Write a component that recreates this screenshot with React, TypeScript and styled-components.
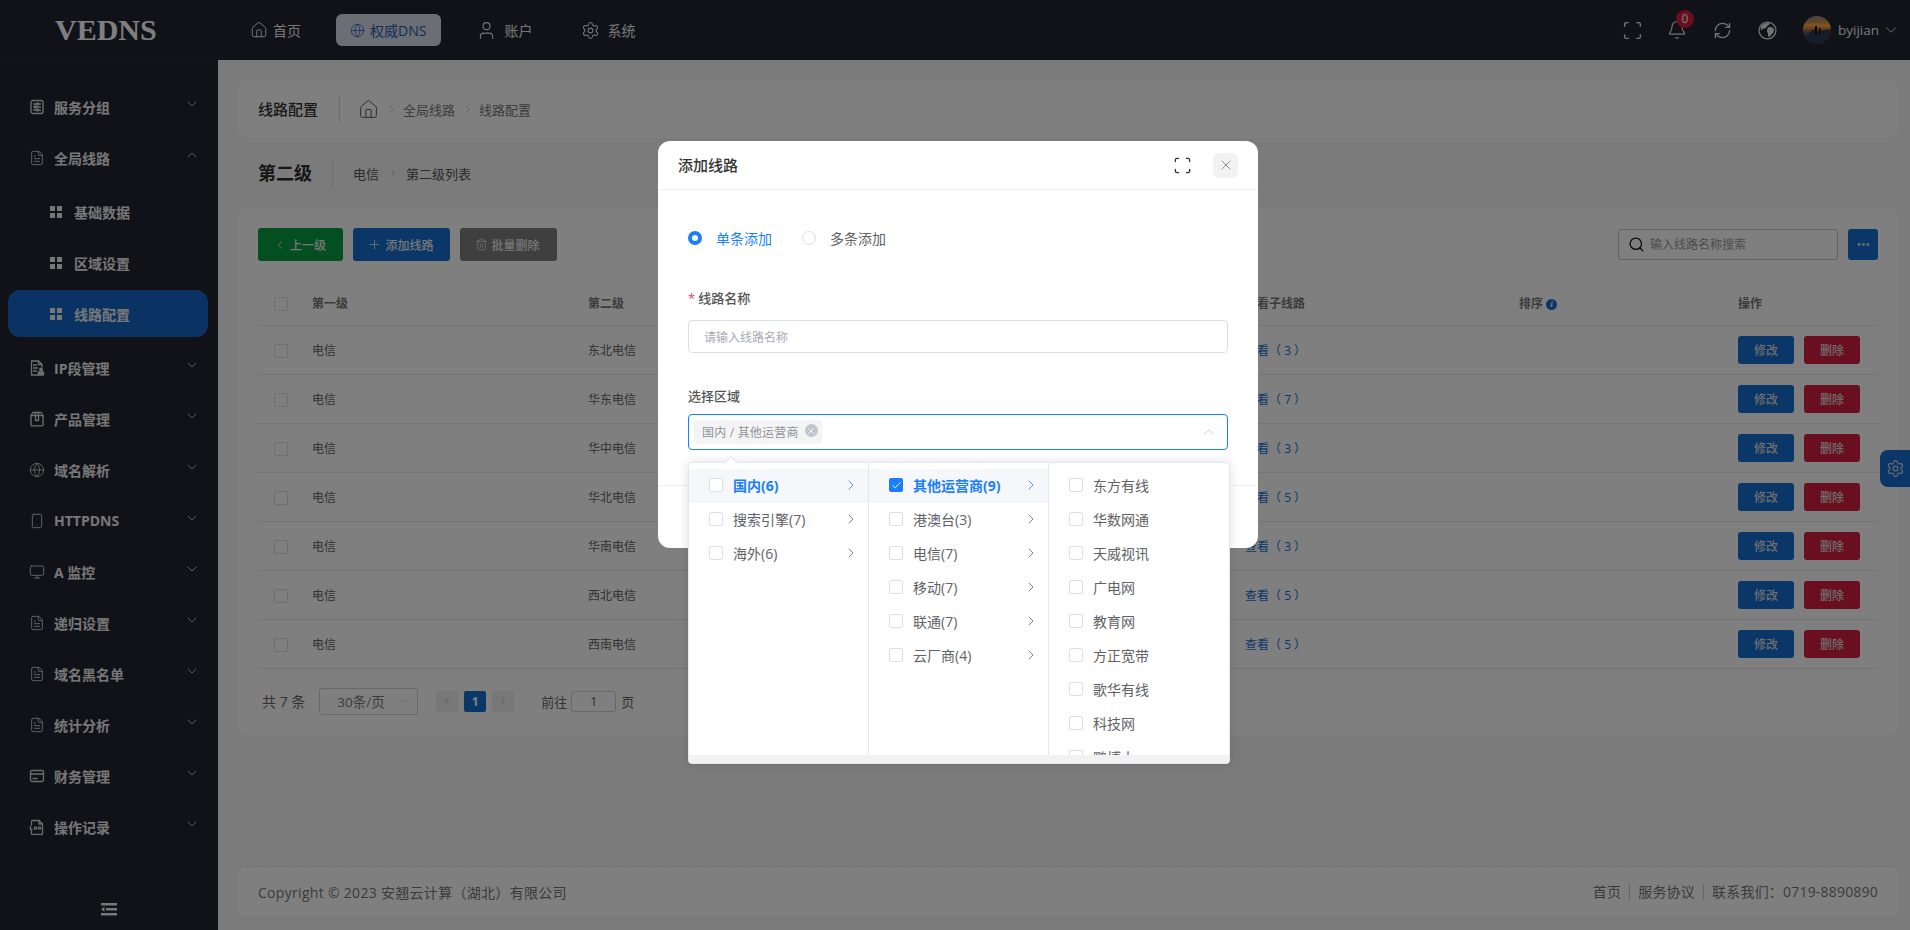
import React from 'react';
import styled, { createGlobalStyle } from 'styled-components';
import {
  Bell,
  Check,
  ChevronDown,
  ChevronLeft,
  ChevronRight,
  ChevronUp,
  Ellipsis,
  FileText,
  Globe,
  Home,
  Monitor,
  Plus,
  RefreshCw,
  Scan,
  Search,
  Settings,
  Smartphone,
  Trash2,
  User,
  X,
} from 'lucide-react';

const FONT = `"Open Sans", "Noto Sans CJK SC", sans-serif`;
const BLUE = '#156fd0';
const RED = '#d51e3e';

const GlobalStyle = createGlobalStyle`
  html, body {
    margin: 0;
    padding: 0;
    height: 100%;
    overflow: hidden;
    font-family: ${FONT};
    background: #f6f6f6;
  }
  * { box-sizing: border-box; }
`;

const Shell = styled.div`
  position: relative;
  width: 1910px;
  height: 930px;
  display: flex;
  flex-direction: column;
  overflow: hidden;
`;

/* top bar */
const TopBar = styled.header`
  height: 60px;
  flex: none;
  background: #20242f;
  display: flex;
  align-items: center;
  color: #eee;
`;

const Logo = styled.div`
  width: 236px;
  padding-left: 55px;
  font-family: "Liberation Serif", serif;
  font-size: 30px;
  font-weight: 700;
  color: #fff;
`;

const Nav = styled.nav`
  display: flex;
  align-items: center;
  gap: 21px;
`;

const NavItem = styled.div<{ $active?: boolean; $spacious?: boolean }>`
  height: 32px;
  display: flex;
  align-items: center;
  gap: ${(p) => (p.$spacious ? '7px' : '5px')};
  padding: 0 ${(p) => (p.$active ? '15px' : '14px')} 0 14px;
  border-radius: 6px;
  font-size: 14px;
  color: ${(p) => (p.$active ? '#2a5aa8' : '#eee')};
  background: ${(p) => (p.$active ? '#d6dcea' : 'transparent')};
`;

const TopTools = styled.div`
  margin-left: auto;
  display: flex;
  align-items: center;
  padding-right: 10px;
`;

const ToolIcon = styled.div`
  position: relative;
  width: 17px;
  height: 17px;
  margin-right: 28px;
  display: flex;
  align-items: center;
  justify-content: center;
  color: #e8e8e8;
  svg { flex: none; }
`;

const Badge = styled.span`
  position: absolute;
  top: -12px;
  left: 7px;
  width: 18px;
  height: 18px;
  border-radius: 50%;
  background: #d01c38;
  color: #fff;
  font-size: 12px;
  line-height: 18px;
  text-align: center;
`;

const Avatar = styled.div`
  width: 28px;
  height: 28px;
  border-radius: 50%;
  overflow: hidden;
  margin: 0 7px 0 -1px;
`;

const UserName = styled.span`
  font-size: 13.500px;
  color: #eee;
  margin-right: 3px;
`;

/* sidebar */
const Body = styled.div`
  flex: 1;
  display: flex;
  min-height: 0;
`;

const Sidebar = styled.aside`
  width: 218px;
  flex: none;
  background: #20242f;
  padding-top: 20px;
  display: flex;
  flex-direction: column;
  border-top: 1px solid #2a2e39;
`;

const MenuRow = styled.div`
  height: 51px;
  display: flex;
  align-items: center;
  padding: 0 18px 0 29px;
  color: #eee;
  font-size: 14px;
  font-weight: 700;
`;

const MenuIcon = styled.span`
  width: 16px;
  height: 16px;
  margin-right: 9px;
  display: flex;
  align-items: center;
  justify-content: center;
  color: #ddd;
`;

const MenuCaret = styled.span`
  margin-left: auto;
  margin-bottom: 5px;
  display: flex;
  color: #ddd;
`;

const SubMenu = styled.div`
  display: flex;
  flex-direction: column;
  gap: 4px;
  margin: 5px 0 5px;
`;

const SubRow = styled.div<{ $active?: boolean }>`
  height: 47px;
  margin: 0 10px 0 8px;
  padding-left: 42px;
  display: flex;
  align-items: center;
  gap: 11px;
  border-radius: 12px;
  font-size: 14px;
  font-weight: 700;
  color: #eee;
  background: ${(p) => (p.$active ? '#1567c9' : 'transparent')};
`;

const CollapseToggle = styled.div`
  margin-top: auto;
  height: 27px;
  display: flex;
  justify-content: center;
  color: #eee;
`;

/* main column */
const Main = styled.main`
  flex: 1;
  min-width: 0;
  padding: 20px 12px 14px 20px;
  display: flex;
  flex-direction: column;
`;

const BreadcrumbCard = styled.div`
  height: 58px;
  flex: none;
  background: #fff;
  border-radius: 8px;
  padding: 0 20px;
  display: flex;
  align-items: center;
`;

const BreadcrumbTitle = styled.div`
  font-size: 15px;
  font-weight: 500;
  color: #333;
  padding-right: 21px;
  margin-right: 18px;
  line-height: 26px;
  border-right: 1px solid #d8d8d8;
`;

const Crumb = styled.span`
  font-size: 13px;
  color: #777;
`;

const CrumbSep = styled.span`
  display: flex;
  margin: 0 4px 0 5px;
  color: #aaa;
`;

const PageHead = styled.div`
  height: 70px;
  flex: none;
  padding-left: 20px;
  display: flex;
  align-items: center;
`;

const PageTitle = styled.h1`
  margin: 0;
  padding-right: 20px;
  margin-right: 20px;
  font-size: 18px;
  font-weight: 700;
  color: #2c2c2c;
  line-height: 30px;
  border-right: 1px solid #dcdcdc;
`;

const PagePath = styled.span`
  font-size: 13px;
  color: #555;
`;

const PathSep = styled.span`
  display: flex;
  margin: 0 7px 0 8px;
  color: #aaa;
`;

const Card = styled.section`
  background: #fff;
  border-radius: 8px;
  padding: 20px;
  flex: none;
`;

const Toolbar = styled.div`
  display: flex;
  align-items: center;
  gap: 10px;
  height: 33px;
  margin-bottom: 20px;
`;

const ToolButton = styled.button<{ $color: string; $width: number }>`
  width: ${(p) => p.$width}px;
  height: 33px;
  border: none;
  border-radius: 3px;
  display: flex;
  align-items: center;
  justify-content: center;
  gap: 3px;
  padding: 0 2px 0 0;
  font-family: ${FONT};
  font-size: 12px;
  font-weight: 500;
  color: #eee;
  background: ${(p) => p.$color};
`;

const SearchBox = styled.label`
  margin-left: auto;
  width: 220px;
  height: 31px;
  border: 1px solid #c4c4c4;
  border-radius: 3px;
  display: flex;
  align-items: center;
  gap: 3px;
  padding-left: 9px;
  color: #111;
`;

const SearchInput = styled.input`
  flex: 1;
  min-width: 0;
  border: none;
  outline: none;
  background: transparent;
  font-family: ${FONT};
  font-size: 12px;
  &::placeholder { color: #999; }
`;

const MoreButton = styled.button`
  width: 30px;
  height: 31px;
  border: none;
  border-radius: 3px;
  background: ${BLUE};
  color: #ddd;
  display: flex;
  align-items: center;
  justify-content: center;
`;

const Table = styled.table`
  width: 1620px;
  table-layout: fixed;
  border-collapse: collapse;
`;

const Th = styled.th<{ $w: number }>`
  width: ${(p) => p.$w}px;
  height: 44px;
  padding: 0;
  text-align: left;
  font-size: 12px;
  font-weight: 700;
  color: #777;
  border-bottom: 1px solid #e8e8e8;
`;

const Td = styled.td`
  height: 49px;
  padding: 0;
  font-size: 12px;
  color: #666;
  border-bottom: 1px solid #e8e8e8;
`;

const Box = styled.span<{ $checked?: boolean; $inset?: number }>`
  width: 14px;
  height: 14px;
  flex: none;
  display: inline-flex;
  align-items: center;
  justify-content: center;
  margin-left: ${(p) => p.$inset || 0}px;
  border: 1px solid ${(p) => (p.$checked ? '#1a7fff' : '#dcdfe6')};
  border-radius: 2px;
  background: ${(p) => (p.$checked ? '#1a7fff' : '#fff')};
  color: #fff;
  vertical-align: middle;
`;

const InfoDot = styled.span`
  display: inline-block;
  width: 11px;
  height: 11px;
  margin-left: 3px;
  border-radius: 50%;
  background: ${BLUE};
  color: #fff;
  font-family: "Liberation Serif", serif;
  font-size: 9px;
  font-style: italic;
  font-weight: 700;
  line-height: 11px;
  text-align: center;
  vertical-align: 1px;
`;

const ViewLink = styled.a`
  color: ${BLUE};
`;

const RowActions = styled.div`
  display: flex;
  gap: 10px;
`;

const RowButton = styled.button<{ $danger?: boolean }>`
  width: 56px;
  height: 28px;
  border: none;
  border-radius: 3px;
  font-family: ${FONT};
  font-size: 12px;
  font-weight: 500;
  color: #ddd;
  background: ${(p) => (p.$danger ? RED : BLUE)};
`;

const Pager = styled.div`
  margin-top: 19px;
  height: 27px;
  display: flex;
  align-items: center;
  padding-left: 4px;
  font-size: 14px;
  color: #666;
`;

const PageSize = styled.div`
  width: 99px;
  height: 27px;
  margin: 0 18px 0 14px;
  padding: 0 8px 0 17px;
  display: flex;
  align-items: center;
  justify-content: space-between;
  border: 1px solid #d0d0d0;
  border-radius: 3px;
  font-size: 13.500px;
  color: #777;
`;

const PageButton = styled.span<{ $active?: boolean }>`
  width: 22px;
  height: 21px;
  margin-right: 6px;
  border-radius: 2px;
  display: flex;
  align-items: center;
  justify-content: center;
  font-size: 12px;
  font-weight: 700;
  color: ${(p) => (p.$active ? '#fff' : '#bbb')};
  background: ${(p) => (p.$active ? BLUE : '#f0f0f0')};
`;

const JumpInput = styled.span`
  width: 45px;
  height: 21px;
  margin: 0 5px 0 4px;
  border: 1px solid #d0d0d0;
  border-radius: 3px;
  display: flex;
  align-items: center;
  justify-content: center;
  font-size: 13px;
`;

const JumpLabel = styled.span`
  margin-left: 21px;
  font-size: 13px;
`;

const JumpUnit = styled.span`
  font-size: 13px;
`;

const Footer = styled.footer`
  margin-top: auto;
  height: 50px;
  flex: none;
  padding: 0 20px;
  display: flex;
  align-items: center;
  justify-content: space-between;
  background: #fff;
  border-top: 1px dashed #ddd;
  border-radius: 8px;
  font-size: 14px;
  color: #777;
`;

const Copyright = styled.span`
  letter-spacing: 0.300px;
`;

const FooterLinks = styled.div`
  display: flex;
  align-items: center;
  letter-spacing: 0.200px;
`;

const FooterLink = styled.span<{ $first?: boolean }>`
  padding-left: ${(p) => (p.$first ? 0 : 8)}px;
  margin-left: ${(p) => (p.$first ? 0 : 8)}px;
  border-left: ${(p) => (p.$first ? 'none' : '1px solid #ccc')};
  line-height: 16px;
`;

const GearTab = styled.div`
  position: absolute;
  right: 0;
  top: 450px;
  width: 30px;
  height: 37px;
  border-radius: 8px 0 0 8px;
  background: ${BLUE};
  color: #ddd;
  display: flex;
  align-items: center;
  justify-content: center;
`;

/* dialog */
const Scrim = styled.div`
  position: absolute;
  inset: 0;
  background: rgba(0, 0, 0, 0.5);
  display: flex;
  justify-content: center;
  align-items: flex-start;
  padding: 141px 0 0 6px;
`;

const Dialog = styled.div`
  width: 600px;
  height: 407px;
  background: #fff;
  border-radius: 12px;
  display: flex;
  flex-direction: column;
`;

const DialogHead = styled.div`
  height: 49px;
  flex: none;
  padding: 0 20px;
  display: flex;
  align-items: center;
  border-bottom: 1px solid #f0f0f0;
`;

const DialogTitle = styled.div`
  font-size: 15px;
  font-weight: 500;
  color: #333;
  margin-bottom: 1px;
`;

const DialogExpand = styled.span`
  margin-left: auto;
  margin-right: 21px;
  display: flex;
  color: #333;
`;

const DialogClose = styled.span`
  width: 25px;
  height: 25px;
  border-radius: 6px;
  background: #f2f2f2;
  display: flex;
  align-items: center;
  justify-content: center;
  color: #777;
`;

const DialogBody = styled.div`
  flex: 1;
  padding: 38px 30px 0;
`;

const DialogFoot = styled.div`
  height: 63px;
  flex: none;
  border-top: 1px solid #f0f0f0;
`;

const RadioRow = styled.div`
  height: 20px;
  display: flex;
  align-items: center;
  margin-bottom: 40px;
`;

const RadioDot = styled.span<{ $on?: boolean }>`
  width: 14px;
  height: 14px;
  border-radius: 50%;
  flex: none;
  margin-right: 14px;
  background: #fff;
  border: ${(p) => (p.$on ? '4.5px solid #1a7fff' : '1px solid #dcdfe6')};
`;

const RadioText = styled.span<{ $on?: boolean }>`
  font-size: 14px;
  color: ${(p) => (p.$on ? '#1a7fff' : '#606266')};
  margin-right: ${(p) => (p.$on ? '30px' : 0)};
`;

const FieldLabel = styled.div`
  height: 20px;
  line-height: 20px;
  font-size: 13px;
  font-weight: 500;
  color: #555;
`;

const Star = styled.span`
  color: #f5364f;
  margin-right: 3px;
`;

const TextField = styled.div`
  height: 33px;
  margin: 12px 0 33px;
  padding-left: 15px;
  display: flex;
  align-items: center;
  border: 1px solid #dcdfe6;
  border-radius: 4px;
  font-size: 12px;
  color: #a8abb2;
`;

const SelectField = styled.div`
  position: relative;
  height: 36px;
  margin-top: 8px;
  padding: 0 9px 0 5px;
  display: flex;
  align-items: center;
  justify-content: space-between;
  border: 1px solid #1a7fff;
  border-radius: 4px;
  color: #c0c4cc;
`;

const Tag = styled.span`
  height: 24px;
  padding: 0 4px 0 8px;
  display: flex;
  align-items: center;
  gap: 6px;
  border-radius: 4px;
  background: #f4f4f5;
  font-size: 12px;
  letter-spacing: 0.200px;
  color: #909399;
`;

const TagClose = styled.span`
  width: 13px;
  height: 13px;
  margin-bottom: 3px;
  border-radius: 50%;
  background: #c0c4cc;
  color: #fff;
  display: flex;
  align-items: center;
  justify-content: center;
`;

/* cascader popup */
const Popup = styled.div`
  position: absolute;
  top: 47px;
  left: -1px;
  width: 542px;
  height: 302px;
  background: #fff;
  border: 1px solid #e4e7ed;
  border-radius: 4px;
  box-shadow: 0 0 12px rgba(0, 0, 0, 0.12);
  display: flex;
  flex-direction: column;
  overflow: visible;
`;

const PopupArrow = styled.span`
  position: absolute;
  top: -5px;
  left: 37px;
  width: 10px;
  height: 10px;
  background: #fff;
  border-left: 1px solid #e4e7ed;
  border-top: 1px solid #e4e7ed;
  transform: rotate(45deg);
`;

const Columns = styled.div`
  flex: 1;
  min-height: 0;
  display: grid;
  grid-template-columns: 180px 180px 1fr;
`;

const Column = styled.div`
  overflow: hidden;
  padding-top: 6px;
  border-right: 1px solid #e4e7ed;
  &:last-child { border-right: none; }
`;

const Option = styled.div<{ $active?: boolean }>`
  height: 34px;
  padding: 0 9px 2px 20px;
  display: flex;
  align-items: center;
  gap: 10px;
  font-size: 14px;
  font-weight: ${(p) => (p.$active ? 700 : 400)};
  color: ${(p) => (p.$active ? '#1a7fff' : '#606266')};
  background: ${(p) => (p.$active ? '#f5f7fa' : 'transparent')};
`;

const OptionArrow = styled.span<{ $active?: boolean }>`
  margin-left: auto;
  display: flex;
  color: ${(p) => (p.$active ? '#1a7fff' : '#606266')};
`;

const ScrollTrack = styled.div`
  height: 8px;
  flex: none;
  background: #f2f2f2;
`;

/* hand drawn icons */
const Stroke = styled.svg`
  fill: none;
  stroke: currentColor;
  stroke-width: 1.3;
  stroke-linecap: round;
  stroke-linejoin: round;
`;

const GroupIcon = () => (
  <Stroke width="16" height="16" viewBox="0 0 16 16">
    <rect x="2" y="1.500" width="12" height="13" rx="2" />
    <path d="M4.500 5h3M9.500 5h2M4.500 8h1M8 8h3.500M4.500 11h3M9.500 11h2" />
    <circle cx="8.500" cy="5" r="1" />
    <circle cx="6.500" cy="8" r="1" />
    <circle cx="8.500" cy="11" r="1" />
  </Stroke>
);

const IpIcon = () => (
  <Stroke width="16" height="16" viewBox="0 0 16 16">
    <path d="M9.500 15H2.500V1h7l3.500 3.500V7" />
    <path d="M9.500 1v3.500H13M4.500 5h3M4.500 8h4M4.500 11h3" />
    <circle cx="12" cy="9.500" r="1.300" fill="currentColor" />
    <rect x="9.500" y="12" width="5" height="3" fill="currentColor" />
  </Stroke>
);

const BoxIcon = () => (
  <Stroke width="16" height="16" viewBox="0 0 16 16">
    <path d="M4 1.500h8l2 3V14a.8.800 0 0 1-.8.800H2.800A.8.800 0 0 1 2 14V4.500z" />
    <path d="M2 4.500h12M6.500 1.500v8h3v-8" />
  </Stroke>
);

const WalletIcon = () => (
  <Stroke width="16" height="16" viewBox="0 0 16 16">
    <rect x="1.500" y="2.500" width="13" height="11" rx="1.500" />
    <path d="M1.500 6h13M4 10.500h4" />
  </Stroke>
);

const LogIcon = () => (
  <Stroke width="16" height="16" viewBox="0 0 16 16">
    <path d="M2.500 6V2.500a1 1 0 0 1 1-1H10l3.500 3.500v9.500a1 1 0 0 1-1 1h-9a1 1 0 0 1-1-1V12" />
    <path d="M10 1.500V5h3.500M1.500 7.500v3h1.500" />
    <circle cx="6.500" cy="9" r="1.200" />
    <circle cx="10.500" cy="9" r="1.200" />
  </Stroke>
);

const GridIcon = () => (
  <svg width="13" height="12" viewBox="0 0 13 12" fill="currentColor">
    <rect x="0" y="0" width="5" height="5" />
    <rect x="7" y="0" width="5" height="5" />
    <rect x="0" y="7" width="5" height="5" />
    <rect x="7" y="7" width="5" height="5" />
  </svg>
);

const OutdentIcon = () => (
  <svg width="16" height="13" viewBox="0 0 16 13" fill="currentColor">
    <rect x="0" y="0" width="16" height="2.500" />
    <rect x="5" y="5" width="11" height="2.500" />
    <rect x="0" y="10" width="16" height="2.500" />
    <path d="M0 6.200 3.500 3.800v5z" />
  </svg>
);

const EarthIcon = () => (
  <svg width="19" height="19" viewBox="0 0 18 18">
    <circle cx="9" cy="9" r="8" fill="none" stroke="currentColor" strokeWidth="1.200" />
    <path
      fill="currentColor"
      d="M5 3c2-1 4-1.500 6-1 .5 1-1 2-2 2.500S8 7 6 7 3.500 8 3 9C2 7 3 4 5 3zM10 6c2-1 4 0 5 1.500.5 2-.5 4-2 5-1 1-2 3-3 2.500s0-3-1-4-.5-4 1-5z"
    />
  </svg>
);

const AvatarPhoto = () => (
  <svg width="28" height="28" viewBox="0 0 28 28">
    <defs>
      <linearGradient id="sky" x1="0" y1="0" x2="0" y2="1">
        <stop offset="0" stopColor="#8a8a88" />
        <stop offset="0.2" stopColor="#c08a50" />
        <stop offset="0.34" stopColor="#ffb040" />
        <stop offset="0.45" stopColor="#d87a30" />
        <stop offset="0.6" stopColor="#50586a" />
        <stop offset="1" stopColor="#1c2a44" />
      </linearGradient>
    </defs>
    <rect width="28" height="28" fill="url(#sky)" />
    <path d="M0 22 L11 13 L14 15 L28 13 V28 H0z" fill="#2c3a54" />
    <path d="M12 10h2v9h-2zM16 12h1.500v7H16z" fill="#10131c" />
  </svg>
);

const GROUPS_BELOW = [
  { icon: <IpIcon />, label: 'IP段管理' },
  { icon: <BoxIcon />, label: '产品管理' },
  { icon: <Globe size={16} strokeWidth={1.2} />, label: '域名解析' },
  { icon: <Smartphone size={16} strokeWidth={1.3} />, label: 'HTTPDNS' },
  { icon: <Monitor size={16} strokeWidth={1.3} />, label: 'A 监控' },
  { icon: <FileText size={16} strokeWidth={1.3} />, label: '递归设置' },
  { icon: <FileText size={16} strokeWidth={1.3} />, label: '域名黑名单' },
  { icon: <FileText size={16} strokeWidth={1.3} />, label: '统计分析' },
  { icon: <WalletIcon />, label: '财务管理' },
  { icon: <LogIcon />, label: '操作记录' },
];

const ROWS = [
  { name: '东北电信', count: 3 },
  { name: '华东电信', count: 7 },
  { name: '华中电信', count: 3 },
  { name: '华北电信', count: 5 },
  { name: '华南电信', count: 3 },
  { name: '西北电信', count: 5 },
  { name: '西南电信', count: 5 },
];

const COL_ONE = ['国内(6)', '搜索引擎(7)', '海外(6)'];
const COL_TWO = ['其他运营商(9)', '港澳台(3)', '电信(7)', '移动(7)', '联通(7)', '云厂商(4)'];
const COL_THREE = ['东方有线', '华数网通', '天威视讯', '广电网', '教育网', '方正宽带', '歌华有线', '科技网', '鹏博士'];

const MenuGroup = ({ icon, label, open }: { icon: React.ReactNode; label: string; open?: boolean }) => (
  <MenuRow>
    <MenuIcon>{icon}</MenuIcon>
    {label}
    <MenuCaret>{open ? <ChevronUp size={16} strokeWidth={1.2} /> : <ChevronDown size={16} strokeWidth={1.2} />}</MenuCaret>
  </MenuRow>
);

const App = () => (
  <Shell>
    <GlobalStyle />
    <TopBar>
      <Logo>VEDNS</Logo>
      <Nav>
        <NavItem>
          <Home size={18} strokeWidth={1.3} />
          首页
        </NavItem>
        <NavItem $active>
          <Globe size={15} strokeWidth={1.2} />
          权威DNS
        </NavItem>
        <NavItem $spacious>
          <User size={21} strokeWidth={1.2} />
          账户
        </NavItem>
        <NavItem $spacious>
          <Settings size={19} strokeWidth={1.3} />
          系统
        </NavItem>
      </Nav>
      <TopTools>
        <ToolIcon>
          <Scan size={21} strokeWidth={1.7} />
        </ToolIcon>
        <ToolIcon>
          <Bell size={20} strokeWidth={1.4} />
          <Badge>0</Badge>
        </ToolIcon>
        <ToolIcon>
          <RefreshCw size={19} strokeWidth={1.6} />
        </ToolIcon>
        <ToolIcon>
          <EarthIcon />
        </ToolIcon>
        <Avatar>
          <AvatarPhoto />
        </Avatar>
        <UserName>byijian</UserName>
        <ChevronDown size={18} strokeWidth={1.2} />
      </TopTools>
    </TopBar>

    <Body>
      <Sidebar>
        <MenuGroup icon={<GroupIcon />} label="服务分组" />
        <MenuGroup icon={<FileText size={16} strokeWidth={1.3} />} label="全局线路" open />
        <SubMenu>
          <SubRow>
            <GridIcon />
            基础数据
          </SubRow>
          <SubRow>
            <GridIcon />
            区域设置
          </SubRow>
          <SubRow $active>
            <GridIcon />
            线路配置
          </SubRow>
        </SubMenu>
        {GROUPS_BELOW.map((g) => (
          <MenuGroup key={g.label} icon={g.icon} label={g.label} />
        ))}
        <CollapseToggle>
          <OutdentIcon />
        </CollapseToggle>
      </Sidebar>

      <Main>
        <BreadcrumbCard>
          <BreadcrumbTitle>线路配置</BreadcrumbTitle>
          <Home size={21} strokeWidth={1.1} color="#555" />
          <CrumbSep>
            <ChevronRight size={15} strokeWidth={1} />
          </CrumbSep>
          <Crumb>全局线路</Crumb>
          <CrumbSep>
            <ChevronRight size={15} strokeWidth={1} />
          </CrumbSep>
          <Crumb>线路配置</Crumb>
        </BreadcrumbCard>

        <PageHead>
          <PageTitle>第二级</PageTitle>
          <PagePath>电信</PagePath>
          <PathSep>
            <ChevronRight size={12} strokeWidth={1.5} />
          </PathSep>
          <PagePath>第二级列表</PagePath>
        </PageHead>

        <Card>
          <Toolbar>
            <ToolButton $color="#099f45" $width={85}>
              <ChevronLeft size={14} strokeWidth={1.3} />
              上一级
            </ToolButton>
            <ToolButton $color={BLUE} $width={97}>
              <Plus size={15} strokeWidth={1.3} />
              添加线路
            </ToolButton>
            <ToolButton $color="#7e7e7e" $width={97}>
              <Trash2 size={13} strokeWidth={1.3} />
              批量删除
            </ToolButton>
            <SearchBox>
              <Search size={17} strokeWidth={1.8} />
              <SearchInput placeholder="输入线路名称搜索" />
            </SearchBox>
            <MoreButton>
              <Ellipsis size={15} strokeWidth={2.6} />
            </MoreButton>
          </Toolbar>

          <Table>
            <thead>
              <tr>
                <Th $w={54}>
                  <Box $inset={16} />
                </Th>
                <Th $w={276}>第一级</Th>
                <Th $w={657}>第二级</Th>
                <Th $w={274}>查看子线路</Th>
                <Th $w={219}>
                  排序
                  <InfoDot>i</InfoDot>
                </Th>
                <Th $w={140}>操作</Th>
              </tr>
            </thead>
            <tbody>
              {ROWS.map((row) => (
                <tr key={row.name}>
                  <Td>
                    <Box $inset={16} />
                  </Td>
                  <Td>电信</Td>
                  <Td>{row.name}</Td>
                  <Td>
                    <ViewLink>查看（ {row.count} ）</ViewLink>
                  </Td>
                  <Td />
                  <Td>
                    <RowActions>
                      <RowButton>修改</RowButton>
                      <RowButton $danger>删除</RowButton>
                    </RowActions>
                  </Td>
                </tr>
              ))}
            </tbody>
          </Table>

          <Pager>
            共 7 条
            <PageSize>
              30条/页
              <ChevronDown size={12} strokeWidth={1.3} color="#bbb" />
            </PageSize>
            <PageButton>
              <ChevronLeft size={12} strokeWidth={2} />
            </PageButton>
            <PageButton $active>1</PageButton>
            <PageButton>
              <ChevronRight size={12} strokeWidth={2} />
            </PageButton>
            <JumpLabel>前往</JumpLabel>
            <JumpInput>1</JumpInput>
            <JumpUnit>页</JumpUnit>
          </Pager>
        </Card>

        <Footer>
          <Copyright>Copyright © 2023 安翘云计算（湖北）有限公司</Copyright>
          <FooterLinks>
            <FooterLink $first>首页</FooterLink>
            <FooterLink>服务协议</FooterLink>
            <FooterLink>联系我们：0719-8890890</FooterLink>
          </FooterLinks>
        </Footer>
      </Main>
    </Body>

    <GearTab>
      <Settings size={19} strokeWidth={1.4} />
    </GearTab>

    <Scrim>
      <Dialog>
        <DialogHead>
          <DialogTitle>添加线路</DialogTitle>
          <DialogExpand>
            <Scan size={19} strokeWidth={1.7} />
          </DialogExpand>
          <DialogClose>
            <X size={16} strokeWidth={1.2} />
          </DialogClose>
        </DialogHead>
        <DialogBody>
          <RadioRow>
            <RadioDot $on />
            <RadioText $on>单条添加</RadioText>
            <RadioDot />
            <RadioText>多条添加</RadioText>
          </RadioRow>
          <FieldLabel>
            <Star>*</Star>
            线路名称
          </FieldLabel>
          <TextField>请输入线路名称</TextField>
          <FieldLabel>选择区域</FieldLabel>
          <SelectField>
            <Tag>
              国内 / 其他运营商
              <TagClose>
                <X size={10} strokeWidth={2} />
              </TagClose>
            </Tag>
            <ChevronUp size={18} strokeWidth={1.1} />
            <Popup>
              <PopupArrow />
              <Columns>
                <Column>
                  {COL_ONE.map((label, i) => (
                    <Option key={label} $active={i === 0}>
                      <Box />
                      {label}
                      <OptionArrow $active={i === 0}>
                        <ChevronRight size={16} strokeWidth={1.2} />
                      </OptionArrow>
                    </Option>
                  ))}
                </Column>
                <Column>
                  {COL_TWO.map((label, i) => (
                    <Option key={label} $active={i === 0}>
                      <Box $checked={i === 0}>{i === 0 && <Check size={11} strokeWidth={2} />}</Box>
                      {label}
                      <OptionArrow $active={i === 0}>
                        <ChevronRight size={16} strokeWidth={1.2} />
                      </OptionArrow>
                    </Option>
                  ))}
                </Column>
                <Column>
                  {COL_THREE.map((label) => (
                    <Option key={label}>
                      <Box />
                      {label}
                    </Option>
                  ))}
                </Column>
              </Columns>
              <ScrollTrack />
            </Popup>
          </SelectField>
        </DialogBody>
        <DialogFoot />
      </Dialog>
    </Scrim>
  </Shell>
);

export default App;
